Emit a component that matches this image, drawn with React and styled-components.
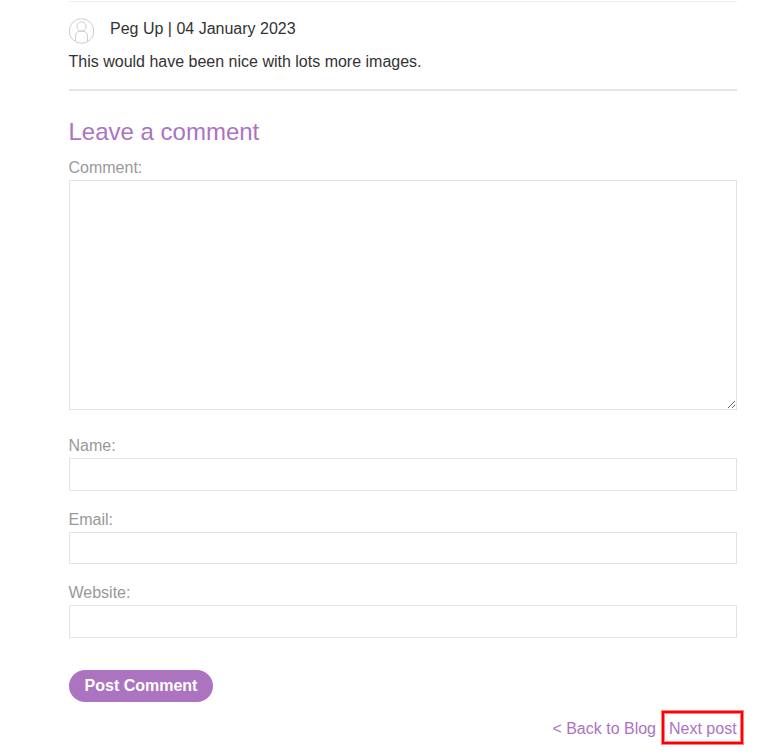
import React from "react";
import styled, { createGlobalStyle } from "styled-components";

const GlobalStyle = createGlobalStyle`
  *, *::before, *::after { box-sizing: border-box; }
  body { margin: 0; background: #fff; color: #333; font: 16px/24px "Liberation Sans", Arial, sans-serif; overflow: hidden; }
`;
const Page = styled.main`
  width: 668px;
  height: 755px;
  margin-left: 68.5px;
  padding-top: 1px;
`;
const Comment = styled.article`
  height: 90px;
  padding-top: 15px;
  border-top: 1px solid #eee;
  border-bottom: 2px solid #e5e5e5;
`;
const Author = styled.header`
  display: flex;
  gap: 15.5px;
  height: 33px;
`;
const Avatar = styled.svg`
  display: block;
  width: 26px;
  height: 27px;
  margin-top: 1px;
`;
const Text = styled.p`
  margin: 0;
`;
const Form = styled.form`
  display: flex;
  flex-direction: column;
  align-items: flex-start;
`;
const Title = styled.h2`
  margin: 26px 0 9px;
  color: #ac73c1;
  font-size: 24px;
  line-height: 30px;
  font-weight: 400;
`;
const Field = styled.label`
  display: block;
  width: 100%;
  height: ${(p) => p.$height}px;
  color: #999;
`;
const Input = styled.input`
  display: block;
  width: 100%;
  height: ${(p) => p.$height}px;
  border: 1px solid #e3e3e3;
  outline: none;
`;
const TextArea = styled.textarea`
  display: block;
  width: 100%;
  height: 230px;
  border: 1px solid #e3e3e3;
  outline: none;
`;
const Button = styled.button`
  width: 144px;
  height: 32px;
  margin-left: 0.5px;
  padding: 0;
  border: 0;
  border-radius: 16px;
  background: #ac73c1;
  color: #fff;
  font: bold 16px/32px "Liberation Sans", Arial, sans-serif;
`;
const Pager = styled.nav`
  display: flex;
  justify-content: flex-end;
  gap: 5px;
  margin: 8px -7.5px 0 0;
  line-height: 28px;
`;
const Link = styled.a`
  color: #ac73c1;
  padding-top: 5px;
`;
const NextLink = styled(Link)`
  width: 83px;
  height: 35px;
  padding: 4px 0 0 7px;
  border: 1px solid #ff8080;
  box-shadow: inset 0 0 0 2px #ff0000, inset 0 0 0 3px #ff8080;
  white-space: nowrap;
`;

export default function App() {
  return (
    <>
      <GlobalStyle />
      <Page>
        <Comment>
          <Author>
            <Avatar viewBox="0 0 26 27" fill="none" stroke="#cdcdcd">
              <circle cx="12.5" cy="13" r="12.3" />
              <circle cx="12.5" cy="8.5" r="4.6" />
              <path d="M6.5 23.5V19q0-5.7 4.5-5.7h3q4.5 0 4.5 5.7v4.5" />
            </Avatar>
            <Text>Peg Up | 04 January 2023</Text>
          </Author>
          <Text>This would have been nice with lots more images.</Text>
        </Comment>
        <Form>
          <Title>Leave a comment</Title>
          <Field $height={278}>Comment:<TextArea /></Field>
          <Field $height={74}>Name:<Input $height={33} /></Field>
          <Field $height={73}>Email:<Input $height={32} /></Field>
          <Field $height={89}>Website:<Input $height={33} /></Field>
          <Button type="button">Post Comment</Button>
        </Form>
        <Pager>
          <Link>&lt; Back to Blog</Link>
          <NextLink>Next post</NextLink>
        </Pager>
      </Page>
    </>
  );
}
